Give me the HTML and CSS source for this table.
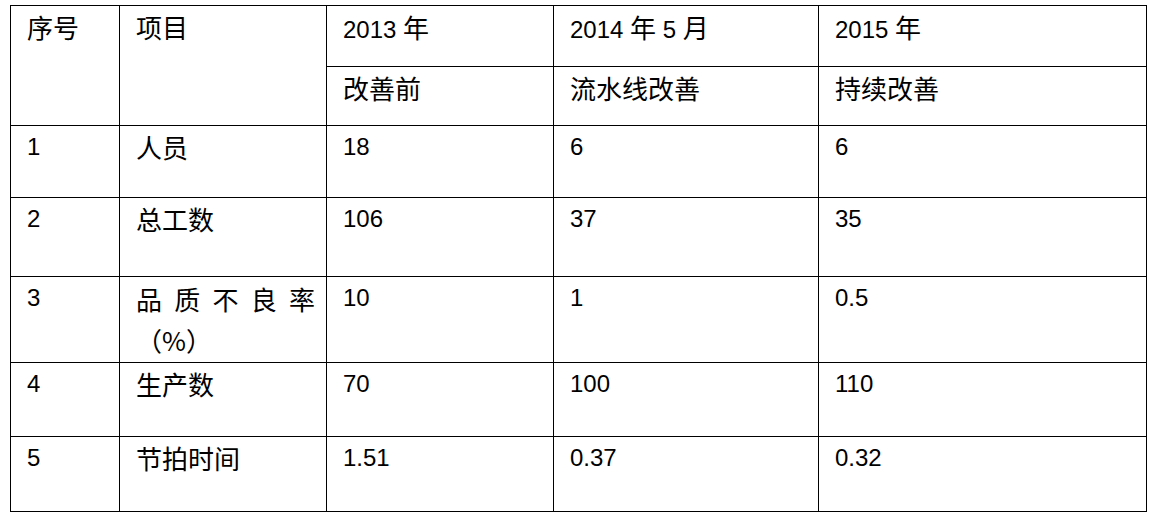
FILE: index.html
```html
<!DOCTYPE html>
<html lang="zh-CN">
<head>
<meta charset="utf-8">
<title>改善对比</title>
<link rel="stylesheet" href="styles.css">
</head>
<body>
<table class="grid">
  <colgroup>
    <col class="c1"><col class="c2"><col class="c3"><col class="c4"><col class="c5">
  </colgroup>
  <tr class="h1">
    <td rowspan="2"><span class="zh">序号</span></td>
    <td rowspan="2"><span class="zh">项目</span></td>
    <td>2013 <span class="zh">年</span></td>
    <td>2014 <span class="zh">年</span> 5 <span class="zh">月</span></td>
    <td>2015 <span class="zh">年</span></td>
  </tr>
  <tr class="h2">
    <td><span class="zh">改善前</span></td>
    <td><span class="zh">流水线改善</span></td>
    <td><span class="zh">持续改善</span></td>
  </tr>
  <tr class="r1">
    <td>1</td><td><span class="zh">人员</span></td><td>18</td><td>6</td><td>6</td>
  </tr>
  <tr class="r2">
    <td>2</td><td><span class="zh">总工数</span></td><td>106</td><td>37</td><td>35</td>
  </tr>
  <tr class="r3">
    <td>3</td><td class="just">品质不良率（%）</td><td>10</td><td>1</td><td>0.5</td>
  </tr>
  <tr class="r4">
    <td>4</td><td><span class="zh">生产数</span></td><td>70</td><td>100</td><td>110</td>
  </tr>
  <tr class="r5">
    <td>5</td><td><span class="zh">节拍时间</span></td><td>1.51</td><td>0.37</td><td>0.32</td>
  </tr>
</table>
</body>
</html>
```
FILE: styles.css
```css
html, body {
  margin: 0;
  padding: 0;
  background: #ffffff;
}
.grid {
  margin: 5px 0 0 10px;
  border-collapse: collapse;
  table-layout: fixed;
  width: 1137px;
  font-family: "Liberation Sans", "Noto Sans CJK SC", sans-serif;
  font-size: 24px;
  line-height: 42px;
  color: #000;
}
.c1 { width: 109px; }
.c2 { width: 207px; }
.c3 { width: 227px; }
.c4 { width: 265px; }
.c5 { width: 328px; }
.grid td {
  border: 1px solid #000;
  vertical-align: top;
  padding: 0 11px 0 16px;
  white-space: normal;
}
.zh {
  font-family: "Noto Sans CJK SC", sans-serif;
  font-size: 26px;
}
.grid td.just {
  font-family: "Noto Sans CJK SC", sans-serif;
  font-size: 26px;
  line-height: 41px;
  text-align: justify;
  text-spacing-trim: space-all;
  padding-top: 1px;
}
.h1 td { height: 60px; }
.h2 td { height: 58px; }
.r1 td { height: 71px; }
.r2 td { height: 78px; }
.r3 td { height: 84px; }
.r4 td { height: 73px; }
.r5 td { height: 74px; }
```
